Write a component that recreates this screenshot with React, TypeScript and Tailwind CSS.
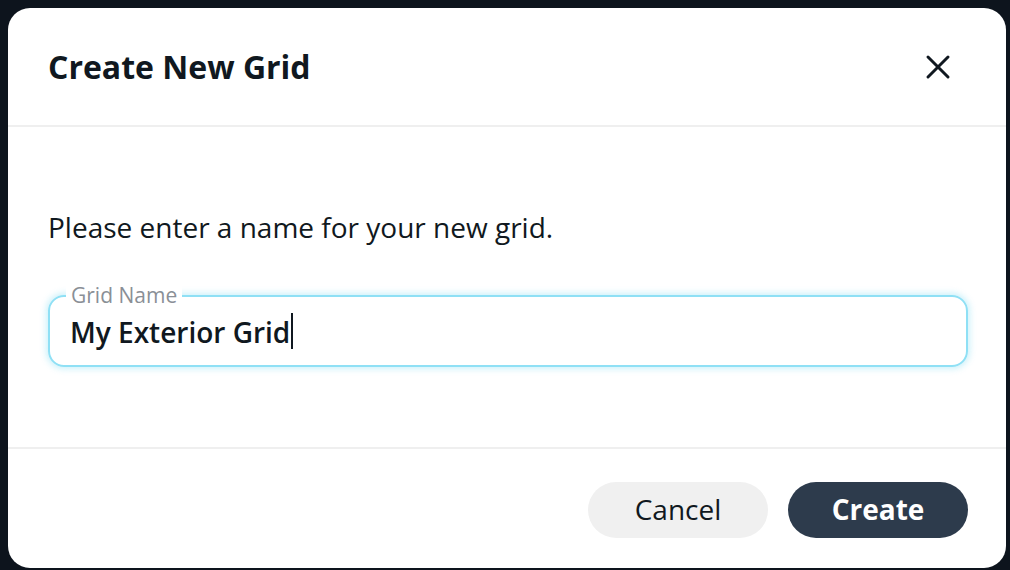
import { X } from 'lucide-react';

export default function App() {
  return (
    <div
      className="h-[570px] w-[1010px] overflow-hidden bg-[#0d141d] p-2"
      style={{ fontFamily: '"Open Sans", sans-serif' }}
    >
      <div className="flex h-[560px] w-[998px] flex-col rounded-[22px] bg-white">
        {/* header */}
        <div className="flex h-[119px] items-center justify-between border-b-2 border-[#efefef] pl-10 pr-[48px]">
          <h2 className="text-[32px] font-bold text-[#101820]">Create New Grid</h2>
          <X className="h-[40px] w-[40px] text-[#101820]" strokeWidth={1.8} />
        </div>

        {/* body */}
        <div className="flex h-[322px] flex-col border-b-2 border-[#efefef] pl-10 pr-[38px] pt-[81px]">
          <p className="text-[28px] leading-[38px] text-[#101820]">
            Please enter a name for your new grid.
          </p>
          <div className="relative mt-[49px] flex h-[72px] items-center rounded-[16px] border-2 border-[#8fe0f5] px-[20px] shadow-[0_0_6px_2px_rgba(143,224,245,0.45)]">
            <span className="absolute -top-[14px] left-[16px] bg-white px-[5px] text-[21px] leading-[24px] text-[#8a8f96]">
              Grid Name
            </span>
            <span className="mt-[1px] text-[28px] font-semibold text-[#101820]">My Exterior Grid</span>
            <span className="ml-[1px] h-[36px] w-[2px] bg-[#101820]" />
          </div>
        </div>

        {/* footer */}
        <div className="flex flex-1 items-center justify-end gap-5 pr-[38px] pt-[2px]">
          <button className="h-[56px] w-[180px] rounded-full bg-[#f0f0f0] pb-[2px] text-[28px] text-[#101820]">
            Cancel
          </button>
          <button className="h-[56px] w-[180px] rounded-full bg-[#2d3b4c] pb-[2px] text-[28px] font-bold text-white">
            Create
          </button>
        </div>
      </div>
    </div>
  );
}
